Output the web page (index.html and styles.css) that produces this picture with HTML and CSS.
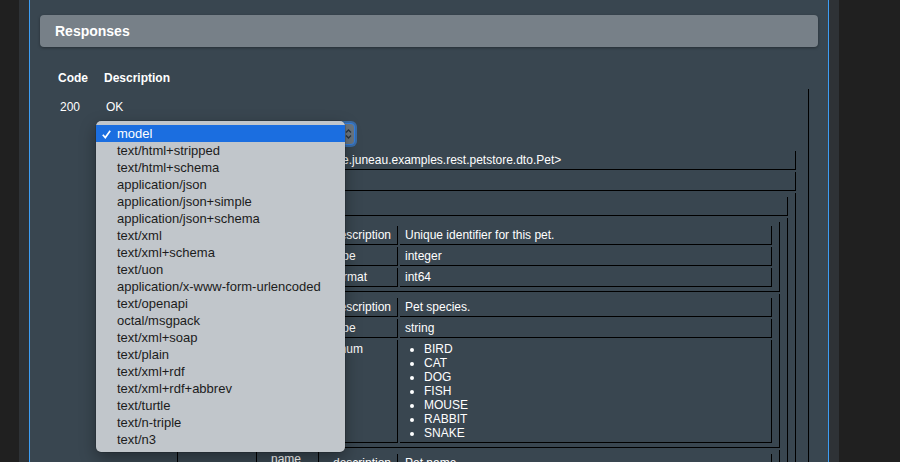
FILE: index.html
```html
<!DOCTYPE html>
<html>
<head>
<meta charset="utf-8">
<link rel="stylesheet" href="styles.css">
</head>
<body>
<div class="frame">
  <div class="panel">
    <div class="bar">Responses</div>
    <table class="resp">
      <tr>
        <th class="code">Code</th>
        <th class="dh">Description</th>
      </tr>
      <tr>
        <td class="codev">200</td>
        <td class="desc">
          <div class="ok">OK</div>
          <div class="selwrap">
            <div class="select">
              <span class="seltext">model</span>
              <svg class="arrows" width="7" height="12" viewBox="0 0 7 12"><path d="M1 4.5 L3.5 2 L6 4.5 M1 7.5 L3.5 10 L6 7.5" fill="none" stroke="#2b3640" stroke-width="1.3"/></svg>
            </div>
            <div class="menu">
              <div class="item sel"><svg class="check" width="9" height="9" viewBox="0 0 9 9"><path d="M0.8 4.8 L3.3 7.6 L8.2 0.8" fill="none" stroke="#fff" stroke-width="1.7"/></svg>model</div>
              <div class="item">text/html+stripped</div>
              <div class="item">text/html+schema</div>
              <div class="item">application/json</div>
              <div class="item">application/json+simple</div>
              <div class="item">application/json+schema</div>
              <div class="item">text/xml</div>
              <div class="item">text/xml+schema</div>
              <div class="item">text/uon</div>
              <div class="item">application/x-www-form-urlencoded</div>
              <div class="item">text/openapi</div>
              <div class="item">octal/msgpack</div>
              <div class="item">text/xml+soap</div>
              <div class="item">text/plain</div>
              <div class="item">text/xml+rdf</div>
              <div class="item">text/xml+rdf+abbrev</div>
              <div class="item">text/turtle</div>
              <div class="item">text/n-triple</div>
              <div class="item">text/n3</div>
            </div>
          </div>
          <table class="map l1">
            <tr><td class="k">description</td><td class="v">java.util.Collection&lt;org.apache.juneau.examples.rest.petstore.dto.Pet&gt;</td></tr>
            <tr><td class="k">type</td><td class="v">array</td></tr>
            <tr><td class="k">items</td><td class="v">
              <table class="map">
                <tr><td class="k">type</td><td class="v">object</td></tr>
                <tr><td class="k">properties</td><td class="v">
                  <table class="map">
                    <tr><td class="k pk">id</td><td class="v">
                      <table class="map">
                        <tr><td class="k">description</td><td class="v">Unique identifier for this pet.</td></tr>
                        <tr><td class="k">type</td><td class="v">integer</td></tr>
                        <tr><td class="k">format</td><td class="v">int64</td></tr>
                      </table>
                    </td></tr>
                    <tr><td class="k pk">species</td><td class="v">
                      <table class="map">
                        <tr><td class="k">description</td><td class="v">Pet species.</td></tr>
                        <tr><td class="k">type</td><td class="v">string</td></tr>
                        <tr><td class="k">enum</td><td class="v">
                          <ul class="enum">
                            <li>BIRD</li>
                            <li>CAT</li>
                            <li>DOG</li>
                            <li>FISH</li>
                            <li>MOUSE</li>
                            <li>RABBIT</li>
                            <li>SNAKE</li>
                          </ul>
                        </td></tr>
                      </table>
                    </td></tr>
                    <tr><td class="k pk">name</td><td class="v">
                      <table class="map">
                        <tr><td class="k">description</td><td class="v">Pet name.</td></tr>
                        <tr><td class="k">type</td><td class="v">string</td></tr>
                      </table>
                    </td></tr>
                  </table>
                </td></tr>
              </table>
            </td></tr>
          </table>
        </td>
      </tr>
    </table>
  </div>
</div>
</body>
</html>
```

FILE: styles.css
```css
html, body {
  margin: 0;
  height: 462px;
  overflow: hidden;
  background: #202020;
}
body {
  font-family: "Liberation Sans", Arial, Helvetica, sans-serif;
  font-size: 12px;
  color: #ffffff;
}
.frame {
  margin-left: 19px;
  width: 800px;
  padding: 0 10px;
  height: 462px;
  background: #2e3236;
}
.panel {
  height: 447px;
  padding: 15px 10px 0;
  background: #394650;
  border-left: 1px solid #3d9ef5;
  border-right: 1px solid #3d9ef5;
}
.bar {
  height: 32px;
  line-height: 32px;
  padding-left: 15px;
  font-size: 14px;
  font-weight: bold;
  background: #778088;
  border-radius: 4px;
  box-shadow: 0 1px 3px rgba(0, 0, 0, 0.35);
}
.resp {
  margin: 18px 0 0 10px;
  width: 759px;
  border-spacing: 0;
  border-collapse: separate;
}
.resp th {
  text-align: left;
  font-weight: bold;
  line-height: 14px;
  padding: 6px 0 4px 0;
}
.resp th.code {
  width: 42px;
  padding-left: 8px;
}
.resp th.dh {
  padding-left: 4px;
}
.codev {
  vertical-align: top;
  padding: 11px 0 0 10px;
  line-height: 14px;
}
.desc {
  vertical-align: top;
  padding: 11px 10px 0 6px;
  border-right: 1px solid #000;
  line-height: 14px;
}
.ok {
  height: 14px;
}
.selwrap {
  position: relative;
  margin-top: 9px;
  width: 249px;
  height: 22px;
}
.select {
  height: 20px;
  border: 1px solid #2f7fe6;
  border-radius: 4px;
  background: #6c7780;
  box-shadow: 0 0 0 2px rgba(58, 140, 240, 0.55);
  position: relative;
}
.seltext {
  display: block;
  padding-left: 10px;
  line-height: 20px;
  color: #fff;
}
.arrows {
  position: absolute;
  right: 2px;
  top: 4px;
}
.menu {
  position: absolute;
  left: -10px;
  top: -2px;
  width: 249px;
  padding: 4px 0;
  background: #c1c6cb;
  border-radius: 5px;
  box-shadow: 0 0 0 0.5px rgba(0, 0, 0, 0.25), 0 6px 16px rgba(0, 0, 0, 0.35);
  z-index: 5;
  font-size: 13px;
  color: #1c1c1c;
}
.item {
  position: relative;
  height: 17px;
  line-height: 17px;
  padding-left: 21px;
  white-space: nowrap;
}
.item.sel {
  background: #1b6ee0;
  color: #fff;
}
.check {
  position: absolute;
  left: 6px;
  top: 5px;
}
.map {
  border-collapse: separate;
  border-spacing: 2px;
  width: 100%;
}
.l1 {
  margin-top: 4px;
}
.map td {
  padding: 2px 5px;
  border-right: 1px solid #000;
  border-bottom: 1px solid #000;
  vertical-align: top;
  line-height: 14px;
  white-space: nowrap;
  text-align: left;
}
.map td.k {
  width: 59px;
}
.map td.k.pk {
  width: 42px;
}
.enum {
  margin: 0;
  padding-left: 19px;
}
.enum li {
  line-height: 14px;
}
```
